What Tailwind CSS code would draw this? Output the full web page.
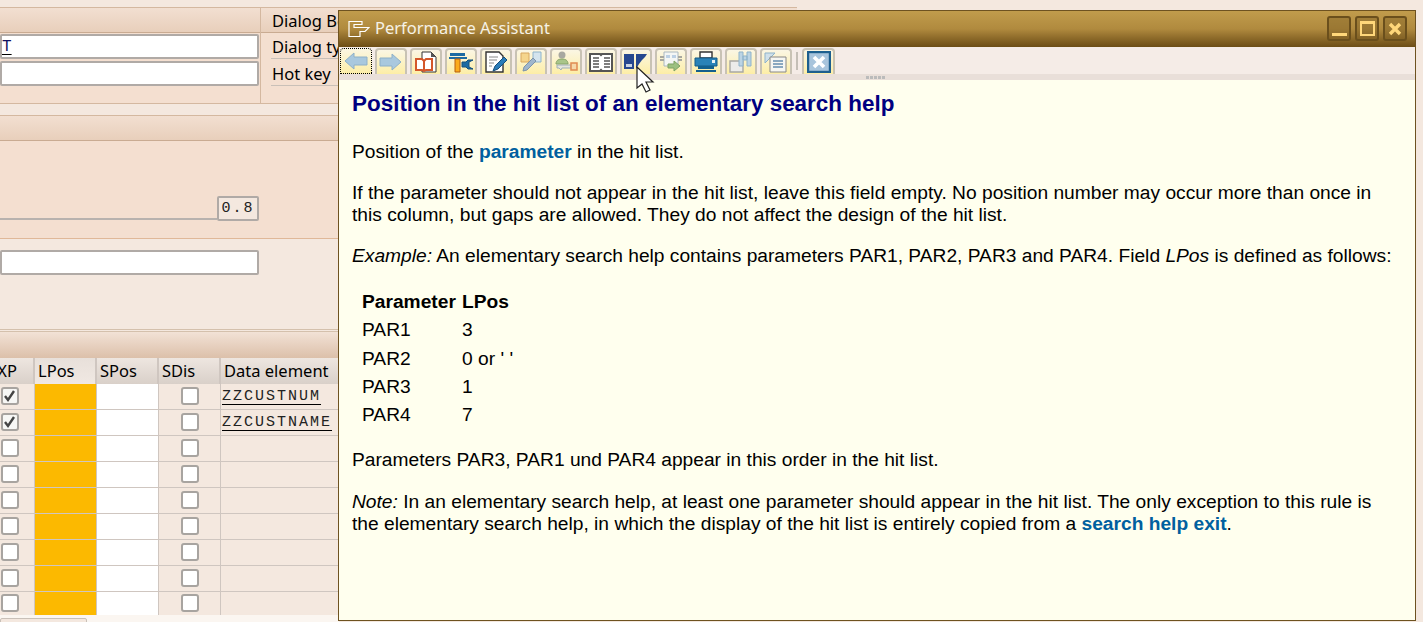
<!DOCTYPE html>
<html lang="en">
<head>
    <meta charset="UTF-8">
    <meta name="viewport" content="width=device-width, initial-scale=1.0">
    <script src="https://cdn.jsdelivr.net/npm/@tailwindcss/browser@4"></script>
    <title>Performance Assistant</title>
</head>
<body class="bg-[#f4e8df]">
<div class="relative w-[1423px] h-[622px] overflow-hidden bg-[#f4e8df] font-['Noto_Sans',sans-serif] text-[16.5px] text-black">

    <!-- SAP screen behind the popup -->
    <div class="w-[797px] pt-[7px]">
        <div class="h-[97px] border-y border-[#d4b8a0] bg-[#f4dfd0] flex">
            <div class="w-[261px] border-r border-[#d4b8a0]">
                <div class="h-[25px] bg-gradient-to-b from-[#f2dfd1] to-[#e8cfbb] border-b border-[#c9ab92]"></div>
                <div class="h-[25px] mt-px flex items-center bg-white border-2 border-[#b0aaa6] rounded-[2px] w-[259px] font-['Liberation_Mono',monospace] text-[16px] text-[#101060]">
                    <span class="underline decoration-black underline-offset-[3px]">T</span>
                </div>
                <div class="h-[25px] mt-[2px] bg-white border-2 border-[#b0aaa6] rounded-[2px] w-[259px]"></div>
            </div>
            <div class="flex-1">
                <div class="h-[25px] bg-gradient-to-b from-[#f2dfd1] to-[#e8cfbb] border-b border-[#c9ab92] pl-[11px] leading-[25px]">Dialog Behavior</div>
                <div class="ml-[10px] h-[26px] border-b border-[#c9c0b8] leading-[27px] pl-px">Dialog type</div>
                <div class="ml-[10px] h-[27px] border-b border-[#c9c0b8] leading-[29px] pl-px">Hot key</div>
            </div>
        </div>
        <div class="h-[11px]"></div>
        <div class="h-[123px] border-t border-[#d4b8a0] bg-[#f4dfd0]">
            <div class="h-[25px] bg-gradient-to-b from-[#f2dfd1] to-[#e8cfbb] border-b border-[#c9ab92]"></div>
            <div class="w-[259px] h-[80px] flex items-end">
                <div class="flex-1 h-[2px] mb-px bg-[#b8b2ae]"></div>
                <div class="w-[42px] h-[25px] bg-[#f4e8df] border-2 border-[#b0aaa6] rounded-[2px] font-['Liberation_Mono',monospace] text-[15px] tracking-[2px] text-center leading-[21px] text-[#222]">0.8</div>
            </div>
        </div>
        <div class="h-[91px] border-t border-[#e0b898] pt-[11px]">
            <div class="w-[259px] h-[25px] bg-white border-2 border-[#b0aaa6] rounded-[2px]"></div>
        </div>
        <div class="h-[3px] border-y border-[#d4c0ac]"></div>
        <div class="h-[26px] bg-gradient-to-b from-[#f2e2d6] to-[#dcc0aa]"></div>
        <div class="grid grid-cols-[35px_62px_62px_62px_118px] w-[339px] h-[26px]">
            <div class="bg-gradient-to-b from-[#eee6e0] to-[#d9d0c9] border-r-2 border-[#cfc6c0] flex justify-end pr-[16px] leading-[25px]">XP</div>
            <div class="bg-gradient-to-b from-[#e8e0da] to-[#f0e8e2] border-r-2 border-[#cfc6c0] pl-[3px] leading-[25px]">LPos</div>
            <div class="bg-gradient-to-b from-[#eee6e0] to-[#d9d0c9] border-r-2 border-[#cfc6c0] pl-[3px] leading-[25px]">SPos</div>
            <div class="bg-gradient-to-b from-[#eee6e0] to-[#d9d0c9] border-r-2 border-[#cfc6c0] pl-[3px] leading-[25px]">SDis</div>
            <div class="bg-gradient-to-b from-[#eee6e0] to-[#d9d0c9] pl-[3px] leading-[25px] whitespace-nowrap">Data element</div>
        </div>
        <div class="w-[339px]">
            <div class="grid grid-cols-[35px_62px_62px_62px_118px] grid-rows-[25px] h-[26px] border-b border-[#cfc6c0]">
                <div class="border-r border-[#cfc6c0] flex items-start pt-[3px] pl-px"><span class="w-[18px] h-[18px] bg-[#f7f7f5] border-2 border-[#a8a4a0] rounded-[3px] flex items-center justify-center"><svg width="14" height="14" viewBox="0 0 14 14"><path d="M2 7l3 4 6-9" fill="none" stroke="#444" stroke-width="2.4"/></svg></span></div>
                <div class="bg-[#fcb900] border-r border-[#cfc6c0]"></div>
                <div class="bg-white border-r border-[#cfc6c0]"></div>
                <div class="border-r border-[#cfc6c0] flex items-start pt-[3px] justify-center"><span class="w-[18px] h-[18px] bg-white border-2 border-[#a8a4a0] rounded-[3px]"></span></div>
                <div class="pl-[1px] font-['Liberation_Mono',monospace] text-[15px] tracking-[2px] leading-[26px] text-[#222] whitespace-nowrap"><span class="underline decoration-black underline-offset-[4px]">ZZCUSTNUM</span></div>
            </div>
            <div class="grid grid-cols-[35px_62px_62px_62px_118px] grid-rows-[25px] h-[26px] border-b border-[#cfc6c0]">
                <div class="border-r border-[#cfc6c0] flex items-start pt-[3px] pl-px"><span class="w-[18px] h-[18px] bg-[#f7f7f5] border-2 border-[#a8a4a0] rounded-[3px] flex items-center justify-center"><svg width="14" height="14" viewBox="0 0 14 14"><path d="M2 7l3 4 6-9" fill="none" stroke="#444" stroke-width="2.4"/></svg></span></div>
                <div class="bg-[#fcb900] border-r border-[#cfc6c0]"></div>
                <div class="bg-white border-r border-[#cfc6c0]"></div>
                <div class="border-r border-[#cfc6c0] flex items-start pt-[3px] justify-center"><span class="w-[18px] h-[18px] bg-white border-2 border-[#a8a4a0] rounded-[3px]"></span></div>
                <div class="pl-[1px] font-['Liberation_Mono',monospace] text-[15px] tracking-[2px] leading-[26px] text-[#222] whitespace-nowrap"><span class="underline decoration-black underline-offset-[4px]">ZZCUSTNAME</span></div>
            </div>
            <div class="grid grid-cols-[35px_62px_62px_62px_118px] h-[26px] border-b border-[#cfc6c0]">
                <div class="border-r border-[#cfc6c0] flex items-start pt-[3px] pl-px"><span class="w-[18px] h-[18px] bg-white border-2 border-[#a8a4a0] rounded-[3px]"></span></div>
                <div class="bg-[#fcb900] border-r border-[#cfc6c0]"></div>
                <div class="bg-white border-r border-[#cfc6c0]"></div>
                <div class="border-r border-[#cfc6c0] flex items-start pt-[3px] justify-center"><span class="w-[18px] h-[18px] bg-white border-2 border-[#a8a4a0] rounded-[3px]"></span></div>
                <div></div>
            </div>
            <div class="grid grid-cols-[35px_62px_62px_62px_118px] h-[26px] border-b border-[#cfc6c0]">
                <div class="border-r border-[#cfc6c0] flex items-start pt-[3px] pl-px"><span class="w-[18px] h-[18px] bg-white border-2 border-[#a8a4a0] rounded-[3px]"></span></div>
                <div class="bg-[#fcb900] border-r border-[#cfc6c0]"></div>
                <div class="bg-white border-r border-[#cfc6c0]"></div>
                <div class="border-r border-[#cfc6c0] flex items-start pt-[3px] justify-center"><span class="w-[18px] h-[18px] bg-white border-2 border-[#a8a4a0] rounded-[3px]"></span></div>
                <div></div>
            </div>
            <div class="grid grid-cols-[35px_62px_62px_62px_118px] h-[26px] border-b border-[#cfc6c0]">
                <div class="border-r border-[#cfc6c0] flex items-start pt-[3px] pl-px"><span class="w-[18px] h-[18px] bg-white border-2 border-[#a8a4a0] rounded-[3px]"></span></div>
                <div class="bg-[#fcb900] border-r border-[#cfc6c0]"></div>
                <div class="bg-white border-r border-[#cfc6c0]"></div>
                <div class="border-r border-[#cfc6c0] flex items-start pt-[3px] justify-center"><span class="w-[18px] h-[18px] bg-white border-2 border-[#a8a4a0] rounded-[3px]"></span></div>
                <div></div>
            </div>
            <div class="grid grid-cols-[35px_62px_62px_62px_118px] h-[26px] border-b border-[#cfc6c0]">
                <div class="border-r border-[#cfc6c0] flex items-start pt-[3px] pl-px"><span class="w-[18px] h-[18px] bg-white border-2 border-[#a8a4a0] rounded-[3px]"></span></div>
                <div class="bg-[#fcb900] border-r border-[#cfc6c0]"></div>
                <div class="bg-white border-r border-[#cfc6c0]"></div>
                <div class="border-r border-[#cfc6c0] flex items-start pt-[3px] justify-center"><span class="w-[18px] h-[18px] bg-white border-2 border-[#a8a4a0] rounded-[3px]"></span></div>
                <div></div>
            </div>
            <div class="grid grid-cols-[35px_62px_62px_62px_118px] h-[26px] border-b border-[#cfc6c0]">
                <div class="border-r border-[#cfc6c0] flex items-start pt-[3px] pl-px"><span class="w-[18px] h-[18px] bg-white border-2 border-[#a8a4a0] rounded-[3px]"></span></div>
                <div class="bg-[#fcb900] border-r border-[#cfc6c0]"></div>
                <div class="bg-white border-r border-[#cfc6c0]"></div>
                <div class="border-r border-[#cfc6c0] flex items-start pt-[3px] justify-center"><span class="w-[18px] h-[18px] bg-white border-2 border-[#a8a4a0] rounded-[3px]"></span></div>
                <div></div>
            </div>
            <div class="grid grid-cols-[35px_62px_62px_62px_118px] h-[26px] border-b border-[#cfc6c0]">
                <div class="border-r border-[#cfc6c0] flex items-start pt-[3px] pl-px"><span class="w-[18px] h-[18px] bg-white border-2 border-[#a8a4a0] rounded-[3px]"></span></div>
                <div class="bg-[#fcb900] border-r border-[#cfc6c0]"></div>
                <div class="bg-white border-r border-[#cfc6c0]"></div>
                <div class="border-r border-[#cfc6c0] flex items-start pt-[3px] justify-center"><span class="w-[18px] h-[18px] bg-white border-2 border-[#a8a4a0] rounded-[3px]"></span></div>
                <div></div>
            </div>
            <div class="grid grid-cols-[35px_62px_62px_62px_118px] h-[23px]">
                <div class="border-r border-[#cfc6c0] flex items-start pt-[2px] pl-px"><span class="w-[18px] h-[18px] bg-white border-2 border-[#a8a4a0] rounded-[3px]"></span></div>
                <div class="bg-[#fcb900] border-r border-[#cfc6c0]"></div>
                <div class="bg-white border-r border-[#cfc6c0]"></div>
                <div class="border-r border-[#cfc6c0] flex items-start pt-[2px] justify-center"><span class="w-[18px] h-[18px] bg-white border-2 border-[#a8a4a0] rounded-[3px]"></span></div>
                <div></div>
            </div>
        </div>
        <div class="h-[10px] w-[339px] bg-[#fbf6f1] pt-[3px]">
            <div class="w-[87px] h-[8px] bg-[#f4e8df] border border-[#c9c0b8] rounded-t-[2px]"></div>
        </div>
    </div>

    <!-- Performance Assistant popup window -->
    <div class="absolute left-[338px] top-[10px] w-[1078px] h-[611px] border border-[#6e5220] flex flex-col bg-[#ffffee] overflow-hidden">
        <div class="h-[36px] shrink-0 bg-gradient-to-b from-[#c19c4c] via-[#b08a3e] to-[#6c4d16] flex items-center pl-[9px] pr-[8px] pb-[1px]">
            <svg width="22" height="18" viewBox="0 0 22 18" class="shrink-0"><path d="M1 1.5h13v3H6v3h15l-4 4h-5v5H1z" fill="none" stroke="#fff" stroke-width="1.2"/></svg>
            <span class="ml-[5px] text-[16.5px] text-[#f6f2e6]">Performance Assistant</span>
            <div class="ml-auto flex gap-[4px]">
                <span class="w-[24px] h-[25px] rounded-[3px] border-2 border-[#6a4f1c] bg-[#7a5c22]/40 flex items-end justify-center pb-[3px]"><span class="w-[15px] h-[3px] bg-[#ffd77a]"></span></span>
                <span class="w-[24px] h-[25px] rounded-[3px] border-2 border-[#6a4f1c] bg-[#7a5c22]/40 flex items-center justify-center"><span class="w-[15px] h-[15px] border-2 border-t-[3px] border-[#ffd77a]"></span></span>
                <span class="w-[24px] h-[25px] rounded-[3px] border-2 border-[#6a4f1c] bg-[#7a5c22]/40 flex items-center justify-center"><svg width="14" height="14" viewBox="0 0 14 14"><path d="M2 2l10 10M12 2L2 12" stroke="#ffd77a" stroke-width="3.4"/></svg></span>
            </div>
        </div>

        <div class="h-[27px] shrink-0 bg-[#f5ece7] flex items-end pl-px gap-[3px]">
            <button class="w-[32px] h-[26px] bg-gradient-to-b from-[#fbf6e4] to-[#fdeea6] outline-1 outline-dotted outline-black -outline-offset-1 rounded-t-[4px] flex items-center justify-center">
                <svg width="26" height="20" viewBox="0 0 26 20"><path d="M2 10l9-8v4h13v8H11v4z" fill="#a9c8de" stroke="#8eb0c8"/></svg>
            </button>
            <button class="w-[32px] h-[26px] bg-gradient-to-b from-[#fbf6e4] to-[#fdeea6] border-2 border-b-0 border-[#c8c2b4] rounded-t-[4px] flex items-center justify-center">
                <svg width="24" height="20" viewBox="0 0 24 20"><path d="M22 10l-9-8v4H1v8h12v4z" fill="#a9c8de" stroke="#8eb0c8"/></svg>
            </button>
            <button class="w-[32px] h-[26px] bg-gradient-to-b from-[#fbf6e4] to-[#fdeea6] border-2 border-b-0 border-[#c8c2b4] rounded-t-[4px] flex items-center justify-center">
                <svg width="24" height="22" viewBox="0 0 24 22"><path d="M8 1h9l5 5v15H8z" fill="#fff" stroke="#333"/><path d="M17 1l5 5h-5z" fill="#555"/><path d="M2 8h6l2 2 2-2h6v11h-6l-2 1-2-1H2z" fill="#fff" stroke="#d4572a" stroke-width="2"/><path d="M10 10v9" stroke="#d4572a" stroke-width="2"/></svg>
            </button>
            <button class="w-[32px] h-[26px] bg-gradient-to-b from-[#fbf6e4] to-[#fdeea6] border-2 border-b-0 border-[#c8c2b4] rounded-t-[4px] flex items-center justify-center">
                <svg width="26" height="22" viewBox="0 0 26 22"><path d="M2 2h15v3H2zM1 6h18v2H1z" fill="#1c6aa3"/><path d="M7 8h5v13H7z" fill="#fbab1c" stroke="#b65f10"/><path d="M25 9h-5l-2 2h-4v5h4l2 2h5l-4-2v-5z" fill="#1c6aa3" stroke="#14507c"/></svg>
            </button>
            <button class="w-[32px] h-[26px] bg-gradient-to-b from-[#fbf6e4] to-[#fdeea6] border-2 border-b-0 border-[#c8c2b4] rounded-t-[4px] flex items-center justify-center">
                <svg width="24" height="22" viewBox="0 0 24 22"><path d="M2 1h13l4 4v16H2z" fill="#fff" stroke="#333" stroke-width="1.4"/><path d="M5 6h9M5 9h8M5 12h5M5 15h3" stroke="#888"/><path d="M9 20l2-5 9-9 3 3-9 9z" fill="#2b7cb8" stroke="#164f7c"/></svg>
            </button>
            <button class="w-[32px] h-[26px] bg-gradient-to-b from-[#fbf6e4] to-[#fdeea6] border-2 border-b-0 border-[#c8c2b4] rounded-t-[4px] flex items-center justify-center">
                <svg width="24" height="22" viewBox="0 0 24 22"><path d="M2 2h8v9H2z" fill="#f5d58c" stroke="#d8a860"/><path d="M14 1h8v10h-8z" fill="#d4e4ee" stroke="#8eb4cc"/><path d="M4 20l1-4 9-9 3 3-9 9z" fill="#9fb6cc" stroke="#7b93ab"/></svg>
            </button>
            <button class="w-[32px] h-[26px] bg-gradient-to-b from-[#fbf6e4] to-[#fdeea6] border-2 border-b-0 border-[#c8c2b4] rounded-t-[4px] flex items-center justify-center">
                <svg width="26" height="22" viewBox="0 0 26 22"><circle cx="9" cy="4" r="3.5" fill="#a8a8a0"/><path d="M3 13c0-4 3-5 6-5s6 1 6 5z" fill="#a9c58a" stroke="#87a468"/><path d="M4 14h14v3H9l-1 2-2-2H4z" fill="#e4e4dc" stroke="#9fb0b8"/><rect x="18" y="12" width="6" height="7" fill="#f6d8a8" stroke="#e08a50" stroke-width="1.5"/></svg>
            </button>
            <button class="w-[32px] h-[26px] bg-gradient-to-b from-[#fbf6e4] to-[#fdeea6] border-2 border-b-0 border-[#c8c2b4] rounded-t-[4px] flex items-center justify-center">
                <svg width="24" height="20" viewBox="0 0 24 20"><path d="M1 2h10l1 1 1-1h10v17H13l-1-1-1 1H1z" fill="#fff" stroke="#555" stroke-width="2"/><path d="M4 6h6M4 9h6M4 12h6M4 15h6M15 6h6M15 9h6M15 12h6M15 15h6" stroke="#555" stroke-width="1.6"/></svg>
            </button>
            <button class="w-[32px] h-[26px] bg-gradient-to-b from-[#fbf6e4] to-[#fdeea6] border-2 border-b-0 border-[#c8c2b4] rounded-t-[4px] flex items-center justify-center">
                <svg width="26" height="20" viewBox="0 0 26 20"><path d="M1 2h10v15H1z" fill="#26488f"/><rect x="3" y="12" width="6" height="3" fill="#c8d4e4"/><path d="M13 2h11l-2 3-3 3-3 4-3 5z" fill="#26488f"/></svg>
            </button>
            <button class="w-[32px] h-[26px] bg-gradient-to-b from-[#fbf6e4] to-[#fdeea6] border-2 border-b-0 border-[#c8c2b4] rounded-t-[4px] flex items-center justify-center">
                <svg width="26" height="22" viewBox="0 0 26 22"><path d="M6 1h14v14H6z" fill="#f4f6f4" stroke="#aab8c0"/><path d="M2 6h4M20 6h4M2 9h4M20 9h4" stroke="#a8a8a0" stroke-width="2"/><path d="M8 4h4v3H8zM14 4h4v3h-4z" fill="#bcd0e4"/><path d="M10 13h6v-3l6 5-6 5v-3h-6z" fill="#9cc080" stroke="#7fa364"/></svg>
            </button>
            <button class="w-[32px] h-[26px] bg-gradient-to-b from-[#fbf6e4] to-[#fdeea6] border-2 border-b-0 border-[#c8c2b4] rounded-t-[4px] flex items-center justify-center">
                <svg width="26" height="22" viewBox="0 0 26 22"><path d="M7 1h12v6H7z" fill="#fff" stroke="#333" stroke-width="1.4"/><path d="M2 7h22v8H2z" fill="#2a82b8" stroke="#145a86"/><rect x="19" y="9" width="3" height="3" fill="#e8f0f4"/><path d="M5 15h16v3H5zM3 19h20v2H3z" fill="#14608e"/></svg>
            </button>
            <button class="w-[32px] h-[26px] bg-gradient-to-b from-[#fbf6e4] to-[#fdeea6] border-2 border-b-0 border-[#c8c2b4] rounded-t-[4px] flex items-center justify-center">
                <svg width="26" height="22" viewBox="0 0 26 22"><path d="M2 10h13v11H2z" fill="#ececea" stroke="#a8a8a4" stroke-width="1.4"/><path d="M11 1h4v14h-4zM19 1h4v14h-4zM15 5h4v4h-4z" fill="#bcd4e4" stroke="#8fb3ca"/></svg>
            </button>
            <button class="w-[32px] h-[26px] bg-gradient-to-b from-[#fbf6e4] to-[#fdeea6] border-2 border-b-0 border-[#c8c2b4] rounded-t-[4px] flex items-center justify-center">
                <svg width="26" height="22" viewBox="0 0 26 22"><path d="M2 2h10L2 12z" fill="#cfe0ea" stroke="#8fb3ca"/><path d="M7 6h16v15H7z" fill="#f6f6f2" stroke="#888"/><path d="M10 10h10M10 13h10M10 16h10" stroke="#8aa8c0" stroke-width="2"/></svg>
            </button>
            <span class="w-[2px] h-[18px] mb-[4px] mx-[1px] bg-[#c4beb6]"></span>
            <button class="w-[33px] h-[26px] bg-gradient-to-b from-[#fbf6e4] to-[#fdeea6] border-2 border-b-0 border-[#c8c2b4] rounded-t-[4px] flex items-center justify-center">
                <svg width="24" height="22" viewBox="0 0 24 22"><rect x="1" y="1" width="22" height="20" fill="#a8c4dc" stroke="#1d5f8e" stroke-width="2.4"/><path d="M7 6l10 10M17 6L7 16" stroke="#fff" stroke-width="3.6"/></svg>
            </button>
        </div>

        <div class="h-[6px] shrink-0 bg-[#e9dfd9] flex justify-center gap-px items-center pr-[4px]">
            <span class="w-[3px] h-[3px] bg-[#bbb]"></span><span class="w-[3px] h-[3px] bg-[#bbb]"></span><span class="w-[3px] h-[3px] bg-[#bbb]"></span><span class="w-[3px] h-[3px] bg-[#bbb]"></span><span class="w-[3px] h-[3px] bg-[#bbb]"></span>
        </div>

        <div class="flex-1 pl-[13px] pr-[15px] font-['Liberation_Sans',sans-serif] text-[19.2px] leading-[22px] text-black">
            <h1 class="mt-[11px] text-[22.45px] leading-[26px] font-bold text-[#000080]">Position in the hit list of an elementary search help</h1>
            <p class="mt-[24px]">Position of the <a class="font-bold text-[#00609f]">parameter</a> in the hit list.</p>
            <p class="mt-[19px]">If the parameter should not appear in the hit list, leave this field empty. No position number may occur more than once in this column, but gaps are allowed. They do not affect the design of the hit list.</p>
            <p class="mt-[19px]"><em>Example:</em> An elementary search help contains parameters PAR1, PAR2, PAR3 and PAR4. Field <em>LPos</em> is defined as follows:</p>
            <div class="mt-[21px] ml-[10px] grid grid-cols-[100px_100px] auto-rows-[28.25px] items-center">
                <b>Parameter</b><b>LPos</b>
                <span>PAR1</span><span>3</span>
                <span>PAR2</span><span>0 or ' '</span>
                <span>PAR3</span><span>1</span>
                <span>PAR4</span><span>7</span>
            </div>
            <p class="mt-[20px]">Parameters PAR3, PAR1 und PAR4 appear in this order in the hit list.</p>
            <p class="mt-[20px]"><em>Note:</em> In an elementary search help, at least one parameter should appear in the hit list. The only exception to this rule is the elementary search help, in which the display of the hit list is entirely copied from a <a class="font-bold text-[#00609f]">search help exit</a>.</p>
        </div>
    </div>

    <!-- mouse pointer -->
    <svg class="absolute left-[636px] top-[66px]" width="20" height="30" viewBox="0 0 20 30"><path d="M1 1v21l5-4 4 8 4-2-4-8h7z" fill="#fff" stroke="#222" stroke-width="1.2"/></svg>
</div>
</body>
</html>
